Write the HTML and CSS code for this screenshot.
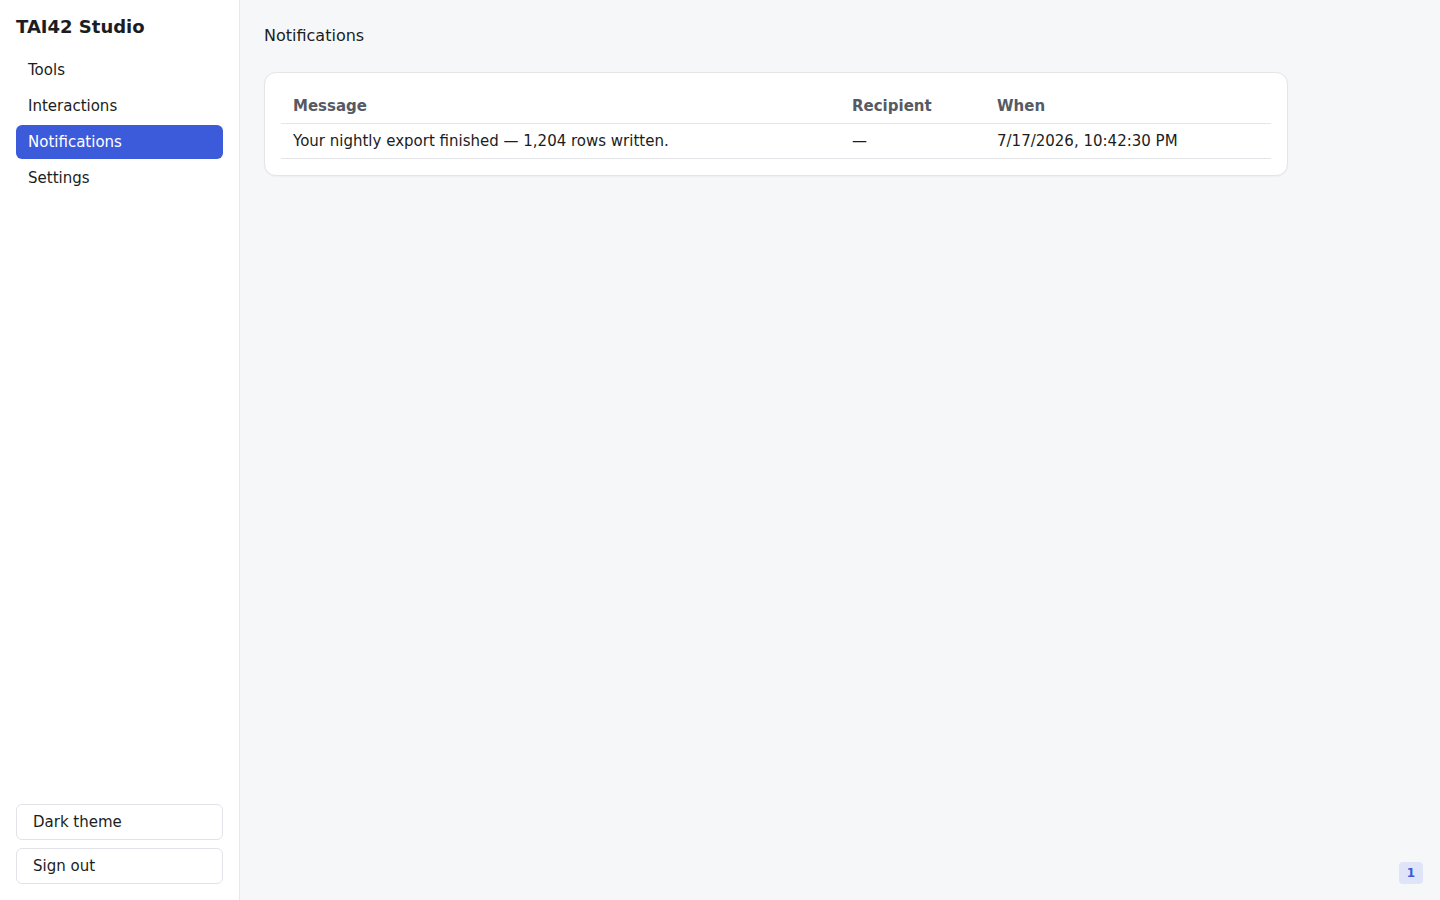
FILE: index.html
```html
<!DOCTYPE html>
<html lang="en">
<head>
<meta charset="utf-8">
<title>TAI42 Studio</title>
<link rel="stylesheet" href="styles.css">
</head>
<body>
<div class="app">
  <aside class="sidebar">
    <div class="brand">TAI42 Studio</div>
    <nav class="nav">
      <a class="nav-item">Tools</a>
      <a class="nav-item">Interactions</a>
      <a class="nav-item active">Notifications</a>
      <a class="nav-item">Settings</a>
    </nav>
    <div class="sidebar-actions">
      <button class="btn">Dark theme</button>
      <button class="btn">Sign out</button>
    </div>
  </aside>
  <main class="main">
    <h1 class="page-title">Notifications</h1>
    <section class="card">
      <table class="table">
        <thead>
          <tr><th class="col-msg">Message</th><th class="col-rec">Recipient</th><th>When</th></tr>
        </thead>
        <tbody>
          <tr><td>Your nightly export finished — 1,204 rows written.</td><td>—</td><td>7/17/2026, 10:42:30 PM</td></tr>
        </tbody>
      </table>
    </section>
  </main>
</div>
<div class="badge">1</div>
</body>
</html>
```
FILE: styles.css
```css
* { box-sizing: border-box; }
html, body { margin: 0; height: 100%; }
body {
  font-family: "DejaVu Sans", sans-serif;
  color: #1b1d22;
  background: #f6f7f9;
}
.app { display: flex; height: 100vh; }
.sidebar {
  width: 240px;
  flex: none;
  background: #ffffff;
  border-right: 1px solid #e6e8ec;
  padding: 15px 16px 16px;
  display: flex;
  flex-direction: column;
}
.brand {
  font-size: 18px;
  font-weight: 700;
  line-height: 24px;
  margin-bottom: 14px;
}
.nav { display: flex; flex-direction: column; gap: 2px; }
.nav-item {
  display: block;
  height: 34px;
  line-height: 34px;
  padding: 0 12px;
  border-radius: 6px;
  font-size: 15px;
  color: #1b1d22;
  cursor: pointer;
}
.nav-item.active { background: #3b5bdb; color: #ffffff; }
.sidebar-actions {
  margin-top: auto;
  display: flex;
  flex-direction: column;
  gap: 8px;
}
.btn {
  height: 36px;
  text-align: left;
  padding: 0 16px;
  background: #ffffff;
  border: 1px solid #e1e3e8;
  border-radius: 6px;
  font-family: inherit;
  font-size: 15px;
  color: #1b1d22;
}
.main { flex: 1; padding: 25px 24px 24px; }
.page-title {
  margin: 0 0 25px;
  font-size: 16px;
  font-weight: 400;
  line-height: 22px;
}
.card {
  max-width: 1024px;
  background: #ffffff;
  border: 1px solid #e3e5e9;
  border-radius: 12px;
  padding: 16px;
  box-shadow: 0 1px 2px rgba(0,0,0,0.04);
}
.table { width: 100%; border-collapse: collapse; font-size: 15px; }
.table th {
  text-align: left;
  font-weight: 700;
  color: #555a64;
  padding: 5px 12px 5px;
  height: 34px;
  line-height: 20px;
  border-bottom: 1px solid #e3e5e9;
}
.table td {
  padding: 0 12px;
  height: 35px;
  line-height: 20px;
  border-bottom: 1px solid #e3e5e9;
}
.table thead tr { height: 34px; }
.col-msg { width: 559px; }
.col-rec { width: 145px; }
.badge {
  position: fixed;
  right: 17px;
  bottom: 16px;
  width: 24px;
  height: 22px;
  border-radius: 4px;
  background: #dfe4f8;
  color: #3b5bdb;
  font-size: 12px;
  font-weight: 700;
  text-align: center;
  line-height: 22px;
}
```
